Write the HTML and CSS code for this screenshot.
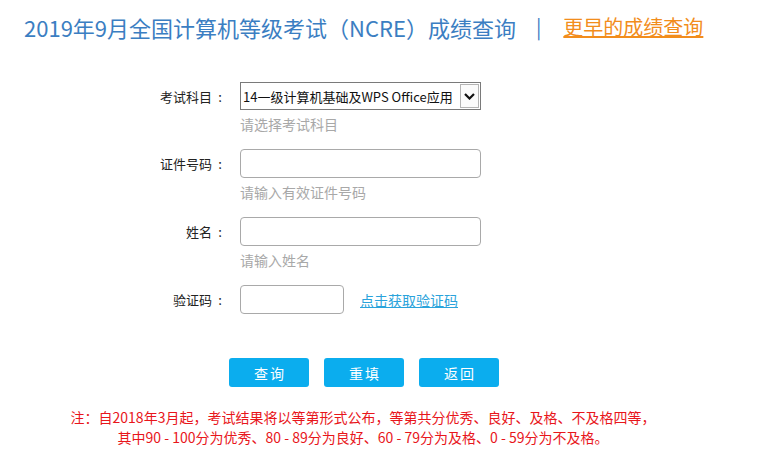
FILE: index.html
```html
<!DOCTYPE html>
<html lang="zh-CN">
<head>
<meta charset="utf-8">
<title>成绩查询</title>
<link rel="stylesheet" href="styles.css">
</head>
<body>
<div class="page">
  <header class="header">
    <h1 class="title">2019年9月全国计算机等级考试（NCRE）成绩查询</h1>
    <span class="sep">|</span>
    <a class="more" href="#">更早的成绩查询</a>
  </header>

  <form class="form">
    <div class="row">
      <label class="label">考试科目<span class="colon">:</span></label>
      <div class="field">
        <div class="select-wrap">
          <select class="select">
            <option>14一级计算机基础及WPS Office应用</option>
          </select>
          <span class="select-arrow">
            <svg width="11" height="7" viewBox="0 0 11 7"><path d="M1 1 L5.5 5.5 L10 1" fill="none" stroke="#111" stroke-width="2.2"/></svg>
          </span>
        </div>
        <div class="hint">请选择考试科目</div>
      </div>
    </div>
    <div class="row">
      <label class="label">证件号码<span class="colon">:</span></label>
      <div class="field">
        <input class="input" type="text">
        <div class="hint">请输入有效证件号码</div>
      </div>
    </div>
    <div class="row">
      <label class="label">姓名<span class="colon">:</span></label>
      <div class="field">
        <input class="input" type="text">
        <div class="hint">请输入姓名</div>
      </div>
    </div>
    <div class="row row-captcha">
      <label class="label">验证码<span class="colon">:</span></label>
      <div class="field field-inline">
        <input class="input input-short" type="text">
        <a class="captcha-link" href="#">点击获取验证码</a>
      </div>
    </div>

    <div class="buttons">
      <button type="button" class="btn">查询</button>
      <button type="button" class="btn">重填</button>
      <button type="button" class="btn">返回</button>
    </div>
  </form>

  <div class="note">
    <p>注：自2018年3月起，考试结果将以等第形式公布，等第共分优秀、良好、及格、不及格四等，</p>
    <p>其中90 - 100分为优秀、80 - 89分为良好、60 - 79分为及格、0 - 59分为不及格。</p>
  </div>
</div>
</body>
</html>
```

FILE: styles.css
```css
* { box-sizing: border-box; }

html, body {
  margin: 0;
  padding: 0;
  background: #fff;
}

body {
  font-family: "Noto Sans CJK SC", "Noto Sans", sans-serif;
  color: #222;
}

.page {
  width: 726px;
}

.header {
  display: flex;
  align-items: center;
  height: 54px;
  padding-left: 24px;
}

.title {
  margin: 0;
  font-size: 22px;
  font-weight: normal;
  color: #3b7ec2;
  line-height: 30px;
}

.sep {
  font-size: 20px;
  color: #3b7ec2;
  margin-left: 20px;
  line-height: 30px;
}

.more {
  margin-left: 22px;
  font-size: 20px;
  line-height: 30px;
  color: #f28d1c;
  text-decoration: underline;
}

.form {
  padding-top: 28px;
}

.row {
  display: grid;
  grid-template-columns: 228px 1fr;
  column-gap: 12px;
  height: 67px;
}

.row + .row { height: 68px; }

.row.row-captcha { height: 73px; }

.label {
  text-align: right;
  font-size: 13px;
  line-height: 29px;
  height: 29px;
  color: #222;
}

.colon {
  display: inline-block;
  width: 16px;
  text-align: center;
}

.field {
  display: flex;
  flex-direction: column;
}

.field-inline {
  flex-direction: row;
  align-items: center;
  height: 29px;
}

.select-wrap {
  position: relative;
  width: 241px;
  height: 28px;
}

.select {
  appearance: none;
  -webkit-appearance: none;
  width: 100%;
  height: 28px;
  border: 1px solid #7a7a7a;
  border-radius: 0;
  background: #fff;
  font-family: inherit;
  font-size: 13px;
  color: #111;
  padding: 0 0 0 2px;
  margin: 0;
  outline: none;
}

.select-arrow {
  position: absolute;
  top: 2px;
  right: 2px;
  width: 19px;
  height: 24px;
  border: 1px solid #b4b4b4;
  background: #fbfbfb;
  display: flex;
  align-items: center;
  justify-content: center;
  pointer-events: none;
}

.input {
  width: 241px;
  height: 29px;
  border: 1px solid #a9a9a9;
  border-radius: 4px;
  margin: 0;
  padding: 0 6px;
  font-size: 13px;
  font-family: inherit;
  outline: none;
}

.input-short {
  width: 104px;
}

.hint {
  font-size: 14px;
  color: #a8a8a8;
  line-height: 20px;
  margin-top: 4px;
}

.captcha-link {
  margin-left: 16px;
  font-size: 14px;
  color: #2aa3db;
  text-decoration: underline;
}

.buttons {
  display: flex;
  justify-content: center;
  gap: 15px;
  padding-left: 2px;
}

.btn {
  width: 80px;
  height: 29px;
  border: none;
  border-radius: 3px;
  background: #0badee;
  color: #fff;
  font-family: inherit;
  font-size: 14px;
  letter-spacing: 2px;
  text-indent: 2px;
  padding: 0;
  cursor: pointer;
}

.note {
  margin-top: 20px;
  text-align: center;
  color: #e8161b;
  font-size: 14px;
  line-height: 20px;
}

.note p {
  margin: 0;
}
```
